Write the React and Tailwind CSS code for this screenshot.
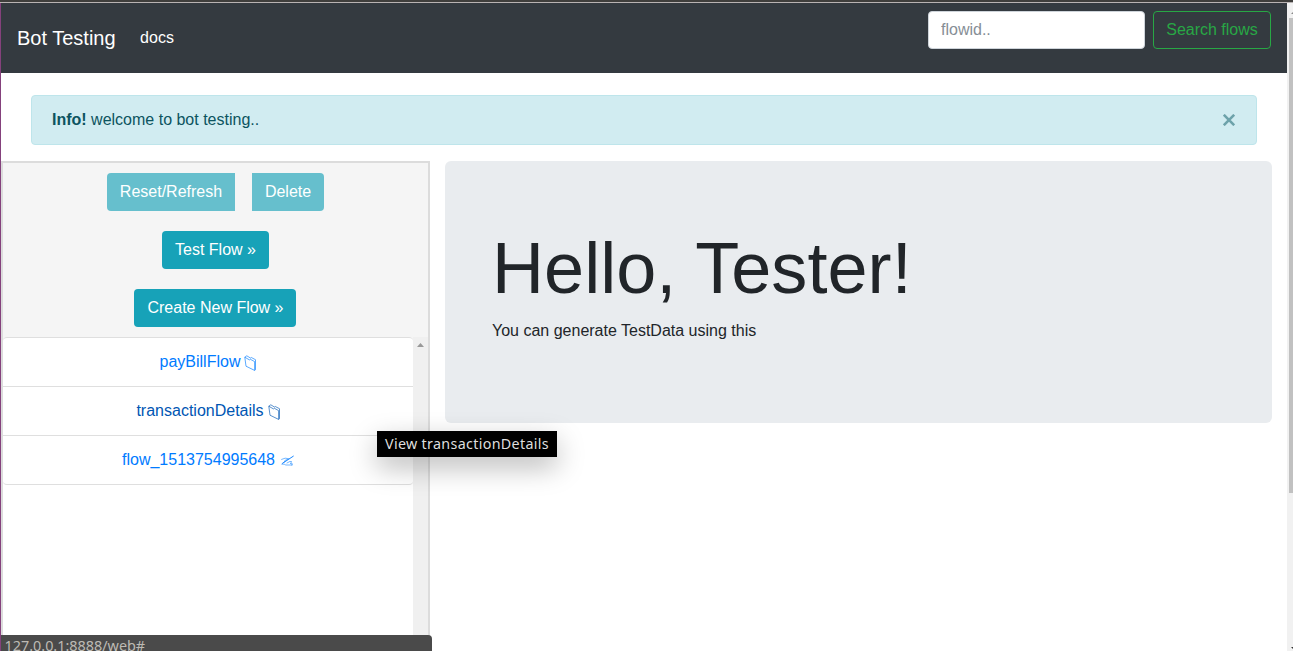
import React from 'react';

function FolderGlyph() {
  return (
    <svg viewBox="0 0 12 16" className="inline-block h-4 w-3 shrink-0" fill="none" stroke="currentColor" strokeWidth="0.65" strokeLinejoin="round">
      <path d="M.8 2.2 2 11.2 10.6 15.4V6.6L6.2 4.2 5.4 4.9.8 2.2Z" />
      <path d="M.8 2.2 2.8.8l3.6 2.2.9-.5 4.2 2.2v10l-.9.7" />
    </svg>
  );
}

function WritingGlyph() {
  return (
    <svg viewBox="0 0 13 11" className="inline-block h-[11px] w-[13px] shrink-0" fill="none" stroke="currentColor" strokeWidth="0.55" strokeLinecap="round" strokeLinejoin="round">
      <path d="M1.4 8.4 12.3 1.2" strokeWidth="0.9" />
      <path d="M.6 4.4 4.2 3.2l3.6.5M2.8 7.6 4.4 5l2.2-.5M.8 9.2h2.4l1.6.8h6.4M6 8l3-1.6 1.8.4-1.6 1.6 2.2.4-.6 1.2" />
    </svg>
  );
}

const flows = [
  { name: 'payBillFlow', icon: 'folder', style: 'text-[#007bff]', gap: 'gap-1' },
  { name: 'transactionDetails', icon: 'folder', style: 'text-[#0056b3]', gap: 'gap-1' },
  { name: 'flow_1513754995648', icon: 'write', style: 'text-[#007bff]', gap: 'gap-1.5' },
];

function Navbar() {
  return (
    <nav className="flex h-[70px] shrink-0 items-start bg-[#343a40] pr-4 pl-4 text-white">
      <a className="mt-5 text-xl leading-[30px]">Bot Testing</a>
      <a className="mt-[23px] ml-[24.5px] leading-6">docs</a>
      <form className="mt-2 ml-auto flex gap-2">
        <input
          placeholder="flowid.."
          className="h-[38px] w-[217px] rounded border border-[#ced4da] bg-white px-3 text-base leading-6 placeholder:text-[#868e96]"
        />
        <button type="button" className="h-[38px] w-[118px] rounded border border-[#28a745] leading-6 whitespace-nowrap text-[#28a745]">
          Search flows
        </button>
      </form>
    </nav>
  );
}

function Sidebar() {
  return (
    <aside className="flex h-[600px] w-[429px] shrink-0 flex-col border-2 border-[#dcdcdc] bg-[#f5f5f5]">
      <div className="flex h-[174px] shrink-0 flex-col items-center gap-5 pt-2.5 text-white">
        <div className="flex gap-[17px]">
          <button className="h-[38px] w-32 rounded-l bg-[#66bfcd] pb-px">Reset/Refresh</button>
          <button className="h-[38px] w-[72px] rounded-r bg-[#66bfcd] pb-px">Delete</button>
        </div>
        <button className="h-[38px] w-[107px] rounded bg-[#17a2b8] pb-px">Test Flow »</button>
        <button className="mr-px h-[38px] w-[162px] rounded bg-[#17a2b8] pb-px pl-px">Create New Flow »</button>
      </div>
      <div className="flex min-h-0 flex-1">
        <div className="flex-1 bg-[#f5f5f5]">
          <div className="h-full rounded-t bg-white">
            <ul className="rounded border-t border-b border-[#dfdfdf]">
              {flows.map((flow) => (
                <li key={flow.name} className="h-[49px] border-b border-[#dfdfdf] last:h-12 last:border-b-0">
                  <a className={`flex h-12 items-center justify-center pb-px ${flow.gap} ${flow.style}`}>
                    <span>{flow.name}</span>
                    <span className="flex pt-0.5">
                      {flow.icon === 'folder' ? <FolderGlyph /> : <WritingGlyph />}
                    </span>
                  </a>
                </li>
              ))}
            </ul>
          </div>
        </div>
        <div className="flex w-[15px] justify-center bg-[#f0f0f0] pt-1.5">
          <svg viewBox="0 0 7 4" className="h-1 w-[7px] fill-[#999]"><path d="M0 4 3.5 0 7 4Z" /></svg>
        </div>
      </div>
    </aside>
  );
}

export default function App() {
  return (
    <div className="relative flex h-[651px] w-full flex-col overflow-hidden bg-white font-['Liberation_Sans',Arial,sans-serif] text-base leading-6 text-[#212529]">
      <div className="h-[3px] shrink-0 border-b border-[#b9b3b3] bg-[#3f3e3c]" />
      <div className="flex min-h-0 flex-1 border-l border-[#84417c]">
        <div className="min-w-0 flex-1">
          <Navbar />
          <div className="mt-[22px] mr-[30px] ml-[30px] flex h-[50px] items-center justify-between rounded border border-[#bee5eb] bg-[#d1ecf1] pr-[19px] pb-px pl-5 text-[#0c5460]">
            <p><strong>Info!</strong> welcome to bot testing..</p>
            <button className="flex h-4 w-4 items-center justify-center text-[#6da2aa]">
              <svg viewBox="0 0 12 12" className="h-3 w-3" stroke="currentColor" strokeWidth="2.6"><path d="m.8.8 10.4 10.4M11.2.8.8 11.2" /></svg>
            </button>
          </div>
          <main className="mt-4 flex items-start gap-[15px]">
            <Sidebar />
            <section className="mr-[15px] h-[262px] flex-1 rounded-md bg-[#e9ecef] px-[47px] pt-16">
              <h1 className="mb-2 text-[72px] leading-[86.4px] font-light tracking-[0.06px]">Hello, Tester!</h1>
              <p>You can generate TestData using this</p>
            </section>
          </main>
        </div>
        <div className="flex w-1.5 shrink-0 flex-col overflow-hidden bg-[#f1f1f1] pl-0.5">
          <div className="flex h-[15px] shrink-0 items-end pb-1 pl-0.5">
            <svg viewBox="0 0 2 2" className="h-0.5 w-0.5 fill-[#888]"><path d="M0 2 2 0v2Z" /></svg>
          </div>
          <div className="h-[475px] shrink-0 bg-[#c1c1c1]" />
          <div className="mt-auto flex pb-0.5 pl-0.5">
            <svg viewBox="0 0 2 2" className="h-0.5 w-0.5 fill-[#333]"><path d="M0 0h2v2Z" /></svg>
          </div>
        </div>
      </div>

      <div className="absolute top-[431px] left-[377px] flex h-[26px] w-[180px] items-center bg-black pb-px pl-2 font-['Noto_Sans',sans-serif] text-[14.3px] tracking-[0.32px] whitespace-nowrap text-[#dedede] shadow-[0_10px_28px_rgba(0,0,0,0.28)]">
        View transactionDetails
      </div>
      <div className="absolute bottom-0 left-px h-4 w-[431px] overflow-hidden rounded-tr bg-[#4a4a4a] pl-[3.5px] font-['Noto_Sans',sans-serif] text-[14.4px] leading-[21px] text-[#bdbab4]">
        127.0.0.1:8888/web#
      </div>
    </div>
  );
}
